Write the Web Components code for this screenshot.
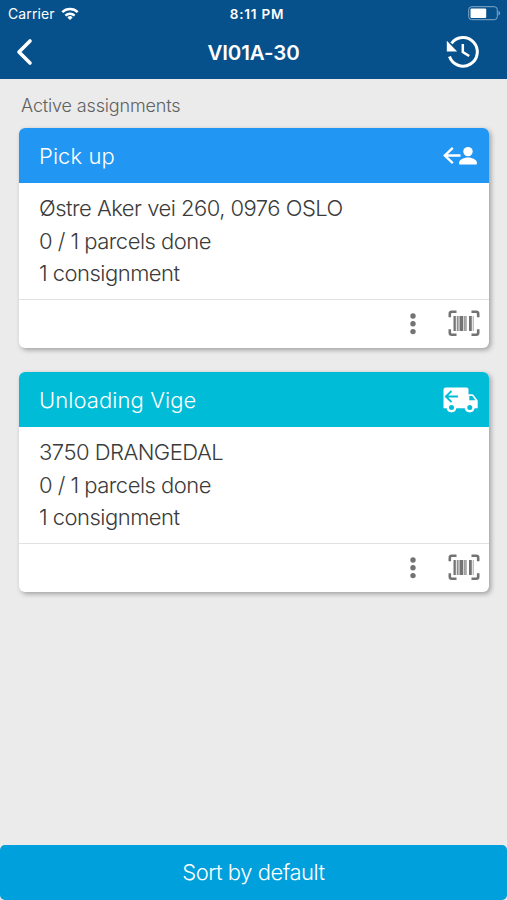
<!DOCTYPE html>
<html lang="en">
<head>
<meta charset="utf-8">
<meta name="viewport" content="width=device-width, initial-scale=1">
<title>Assignments</title>
<style>
  html, body { height: 100%; margin: 0; }
  body { font-family: Inter, "Liberation Sans", sans-serif; font-weight: 300; color: #3b3b3b; background: #ebebeb; }
</style>
</head>
<body>
<assignments-screen></assignments-screen>

<script>
const define = (name, html, setup) => {
  customElements.define(name, class extends HTMLElement {
    connectedCallback() {
      this.attachShadow({ mode: 'open' }).innerHTML = html;
      setup?.call(this, this.shadowRoot);
    }
  });
};

const ICONS = {
  back: [16, 27, '<path d="M14 2 3 13l11 11" fill="none" stroke="currentColor" stroke-width="3.600" stroke-linecap="round" stroke-linejoin="round"/>'],
  wifi: [18, 13, '<g fill="none" stroke="currentColor" stroke-width="2.400"><path d="M1.300 5.200a11 11 0 0 1 15.400 0"/><path d="M4.400 8.600a6.500 6.500 0 0 1 9.200 0"/></g><path d="M6.400 10.400a3.700 3.700 0 0 1 5.200 0L9 13z" fill="currentColor"/>'],
  battery: [33, 15, '<rect x=".7" y=".7" width="28.600" height="13" rx="3" fill="none" stroke="#83a9c9"/><rect x="2.500" y="2.500" width="15.700" height="9.400" rx="1" fill="#fff"/><path d="M30.500 5c2 .7 2 3.700 0 4.400z" fill="#83a9c9"/>'],
  history: [34, 33, '<path d="M3.500 20.500A14.300 14.300 0 1 0 5.500 7.300" fill="none" stroke="currentColor" stroke-width="3"/><path d="M.8 4.800v10.700h10.400z" fill="currentColor"/><path d="M16.800 8v8l6.400 4" fill="none" stroke="currentColor" stroke-width="2.500"/>'],
  pickup: [34, 20, '<path d="M9.800 1.800 1.800 9.500l8 7.700M2 9.500h15.500" fill="none" stroke="currentColor" stroke-width="2.400"/><circle cx="25" cy="5.600" r="4.700" fill="currentColor"/><path d="M16.200 18.500v-2.200c0-3 5.900-4.700 8.800-4.700s8.800 1.700 8.800 4.700v2.200z" fill="currentColor"/>'],
  unload: [34, 26, '<path fill="currentColor" d="M3 .5h20.500q2 0 2 2v4.700h3.300q1.100 0 1.800.9l4.100 5.500v7.600h-3.200a5 5 0 0 1-9.800 0h-8.300a5 5 0 0 1-9.800 0H.5V3Q.5.500 3 .500z"/><path d="M26.300 9h3l3 4.300h-6z" fill="var(--tone)"/><path d="M8.500 4 2.800 9.500l5.700 5.500M3 9.500h12" fill="none" stroke="var(--tone)" stroke-width="1.800"/><g fill="var(--tone)" stroke="currentColor" stroke-width="2.200"><circle cx="8.500" cy="20.600" r="3.600"/><circle cx="26.800" cy="20.600" r="3.600"/></g>'],
  more: [6, 22, '<g fill="currentColor"><circle cx="3" cy="3" r="2.700"/><circle cx="3" cy="10.800" r="2.700"/><circle cx="3" cy="18.600" r="2.700"/></g>'],
  scan: [32, 27, '<path d="M8.500 1.800H3.800q-2 0-2 2v3.500M23.500 1.800h4.700q2 0 2 2v3.500M8.500 24.700H3.800q-2 0-2-2v-3.500M23.500 24.700h4.700q2 0 2-2v-3.500" fill="none" stroke="currentColor" stroke-width="2.600"/><g fill="currentColor"><path d="M5.500 6h2.300v15H5.500zM8.800 6h1v15h-1zM11.500 6h3.800v15h-3.800zM16.300 6h1.300v15h-1.300zM21 6h2.800v15H21z"/><path opacity=".65" d="M10.200 6h.8v15h-.8zM18.200 6h.8v15h-.8zM24.700 6h1v15h-1z"/></g>'],
};

define('app-icon', '<style>:host { display: block; flex: none; } svg { display: block; overflow: visible; }</style>', function (root) {
  const [w, h, shape] = ICONS[this.getAttribute('name')];
  root.innerHTML += `<svg width="${w}" height="${h}" viewBox="0 0 ${w} ${h}">${shape}</svg>`;
});

define('status-bar', `
  <style>
    :host { display: grid; grid-template-columns: 1fr auto 1fr; align-items: center; height: 27px; padding: 0 6px 0 8px; font-size: 14px; font-weight: 400; }
    .carrier { display: flex; align-items: center; gap: 6px; letter-spacing: .1px; }
    .time { padding-left: 5px; font-weight: 600; font-size: 13.500px; letter-spacing: .8px; }
    .battery { justify-self: end; }
  </style>
  <div class="carrier"><span>Carrier</span><app-icon name="wifi"></app-icon></div>
  <span class="time">8:11 PM</span>
  <app-icon class="battery" name="battery"></app-icon>
`);

define('nav-bar', `
  <style>
    :host { display: grid; grid-template-columns: 1fr auto 1fr; align-items: center; height: 52px; padding: 0 27px 2px 16px; box-sizing: border-box; }
    h1 { margin: 0; padding-left: 11px; font-size: 20.500px; font-weight: 600; letter-spacing: -.1px; }
    .end { justify-self: end; }
  </style>
  <app-icon name="back"></app-icon>
  <h1><slot></slot></h1>
  <app-icon class="end" name="history"></app-icon>
`);

/* <assignment-card heading icon tone> with one <div> per text line */
define('assignment-card', `
  <style>
    :host { display: flex; flex-direction: column; height: 220px; border-radius: 6px; overflow: hidden; background: #fff; box-shadow: 2px 2px 5px rgba(0, 0, 0, .32); font-size: 22px; }
    header { display: flex; justify-content: space-between; align-items: center; height: 55px; padding: 0 12px 0 20px; background: var(--tone); color: #fff; box-sizing: border-box; }
    .heading { letter-spacing: .08px; }
    .body { flex: 1; padding: 9px 20px 0; line-height: 32.500px; letter-spacing: -.52px; }
    footer { display: flex; justify-content: flex-end; align-items: center; gap: 32px; height: 47px; padding: 0 9px 1px 0; border-top: 1px solid #e2e2e2; color: #737373; }
  </style>
  <header><span class="heading"></span></header>
  <div class="body"><slot></slot></div>
  <footer><app-icon name="more"></app-icon><app-icon name="scan"></app-icon></footer>
`, function (root) {
  this.style.setProperty('--tone', this.getAttribute('tone'));
  root.querySelector('.heading').textContent = this.getAttribute('heading');
  const icon = document.createElement('app-icon');
  icon.setAttribute('name', this.getAttribute('icon'));
  root.querySelector('header').append(icon);
});

define('action-button', `
  <style>
    :host { display: block; }
    button { display: block; width: 100%; height: 55px; padding: 0 0 2px; border: 0; border-radius: 5px; background: #00a0dc; color: #fff; font: inherit; font-size: 22px; letter-spacing: -.48px; }
  </style>
  <button><slot></slot></button>
`);

define('assignments-screen', `
  <style>
    :host { display: flex; flex-direction: column; height: 100%; }
    .top { background: #06518b; color: #fff; }
    main { flex: 1; display: flex; flex-direction: column; padding: 0 18px 0 19px; }
    h2 { margin: 0; padding-left: 2px; height: 49px; line-height: 53px; font-size: 18px; font-weight: 300; letter-spacing: -.15px; color: #606060; }
    .list { display: flex; flex-direction: column; gap: 24.400px; }
  </style>
  <div class="top">
    <status-bar></status-bar>
    <nav-bar>VI01A-30</nav-bar>
  </div>
  <main>
    <h2>Active assignments</h2>
    <div class="list">
      <assignment-card heading="Pick up" icon="pickup" tone="#2196f3">
        <div>Østre Aker vei 260, 0976 OSLO</div>
        <div>0 / 1 parcels done</div>
        <div>1 consignment</div>
      </assignment-card>
      <assignment-card heading="Unloading Vige" icon="unload" tone="#00bcd7">
        <div>3750 DRANGEDAL</div>
        <div>0 / 1 parcels done</div>
        <div>1 consignment</div>
      </assignment-card>
    </div>
  </main>
  <action-button>Sort by default</action-button>
`);
</script>
</body>
</html>
